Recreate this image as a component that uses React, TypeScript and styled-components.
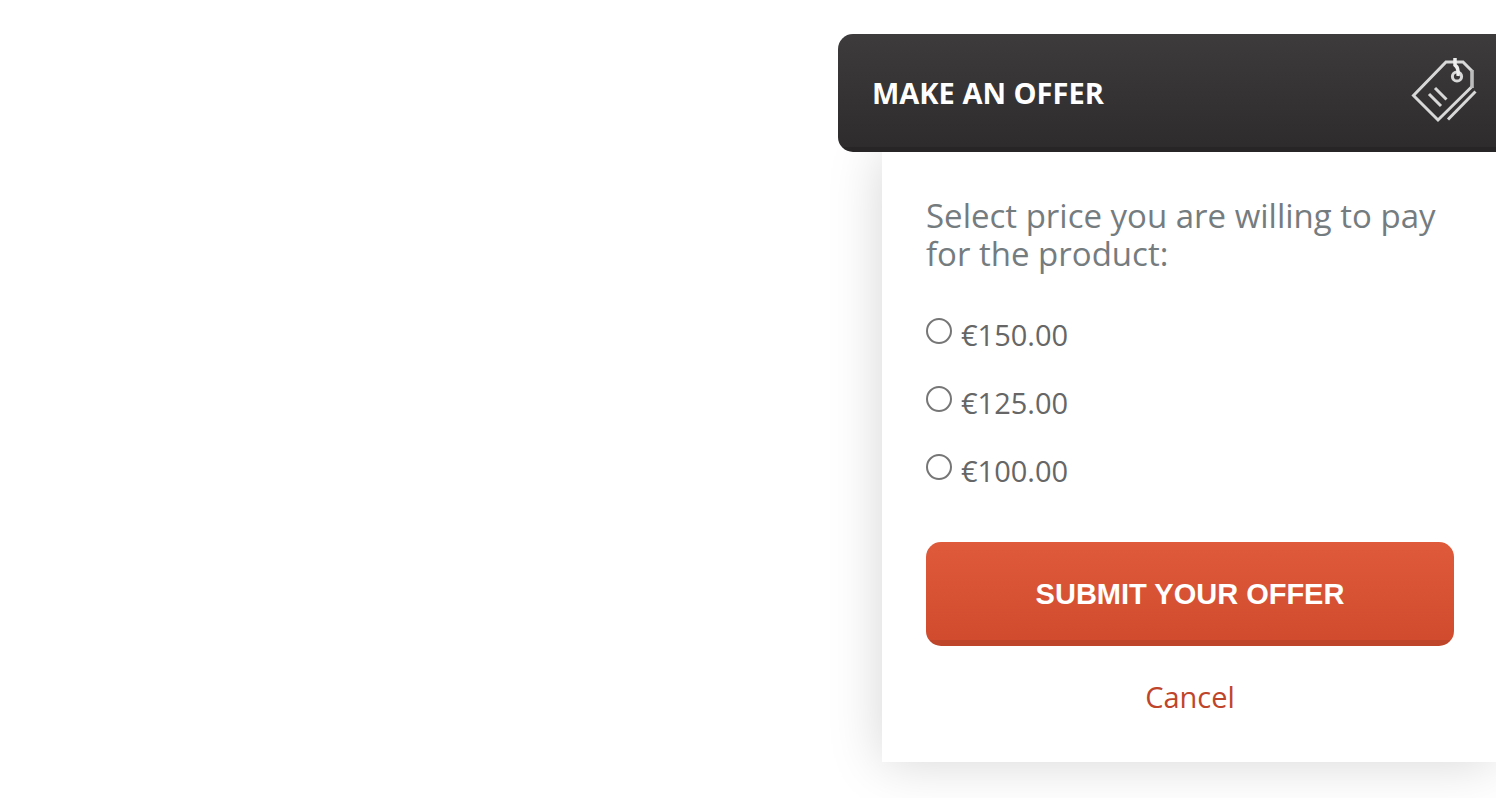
import React, { useState } from "react";
import styled, { createGlobalStyle } from "styled-components";

const GlobalStyle = createGlobalStyle`
  *, *::before, *::after { box-sizing: border-box; }
  body {
    margin: 0;
    background: #fff;
    font-family: "Open Sans", sans-serif;
  }
`;

const Page = styled.main`
  display: flex;
  justify-content: flex-end;
  padding: 34px 0 36px;
  overflow: hidden;
`;

const Widget = styled.section`
  display: flex;
  flex-direction: column;
  width: 100%;
  max-width: 658px;
`;

const Header = styled.header`
  position: relative;
  z-index: 1;
  display: flex;
  align-items: center;
  justify-content: space-between;
  height: 118px;
  padding: 0 18px 0 34px;
  border-radius: 15px 0 0 15px;
  background:
    linear-gradient(#282526, #282526) bottom / 100% 5px no-repeat,
    linear-gradient(#3d3b3c, #2d2b2c);
`;

const Title = styled.h1`
  margin: 0;
  color: #fff;
  font-size: 29px;
  line-height: 40px;
  font-weight: 700;
`;

const TagIcon = styled.svg`
  width: 68px;
  height: 68px;
  margin-bottom: 4px;
  fill: none;
  stroke: #d8d8d8;
  stroke-width: 3;
`;

const Panel = styled.form`
  margin-left: 44px;
  padding: 45px 42px 45px 44px;
  background: #fff;
  box-shadow: 0 0 50px rgba(0, 0, 0, 0.17);
`;

const Options = styled.fieldset`
  display: flex;
  flex-direction: column;
  gap: 28px;
  margin: 0;
  padding: 0;
  border: 0;
`;

const Prompt = styled.legend`
  margin-bottom: 42px;
  padding: 0;
  color: #757c80;
  font-size: 33px;
  line-height: 38px;
`;

const Option = styled.label`
  display: flex;
  align-items: flex-start;
  gap: 9px;
  color: #666;
  font-size: 29px;
  line-height: 40px;
`;

const Radio = styled.input`
  appearance: none;
  width: 26px;
  height: 26px;
  margin: 3px 0 0;
  border: 2px solid #767676;
  border-radius: 50%;
  background: #fff;

  &:checked {
    border-color: #c0462b;
    background: radial-gradient(#c0462b 45%, #fff 50%);
  }
`;

const Submit = styled.button`
  display: block;
  width: 100%;
  height: 104px;
  margin-top: 51px;
  padding: 0;
  border: 0;
  border-radius: 15px;
  background:
    linear-gradient(#bf452a, #bf452a) bottom / 100% 6px no-repeat,
    linear-gradient(#df5a3a, #d04a2d);
  color: #fff;
  font-family: "Liberation Sans", Arial, sans-serif;
  font-size: 29px;
  font-weight: 700;
  cursor: pointer;
`;

const Actions = styled.div`
  display: flex;
  justify-content: center;
  margin-top: 31px;
`;

const Cancel = styled.a`
  color: #bf452a;
  font-size: 29px;
  line-height: 40px;
  text-decoration: none;
`;

const prices = ["€150.00", "€125.00", "€100.00"];

export default function App() {
  const [selected, setSelected] = useState<string | null>(null);

  return (
    <Page>
      <GlobalStyle />
      <Widget>
        <Header>
          <Title>MAKE AN OFFER</Title>
          <TagIcon viewBox="0 0 68 68" aria-hidden="true">
            <path d="M62 14 L53 5 H36 L3.5 38.5 L28 63 L62 29.5" />
            <path d="M62 13 V31" stroke="#bcbcbc" strokeWidth="3.6" />
            <path d="M38 62.5 L65.5 34.5" />
            <path d="M19 37 L31 49 M25 31 L36.5 42.5" />
            <circle cx="47" cy="19.5" r="4.6" />
            <path d="M45 1 V8 Q49 11 48 19" strokeWidth="3.5" stroke="#eee" />
          </TagIcon>
        </Header>
        <Panel onSubmit={(event) => event.preventDefault()}>
          <Options>
            <Prompt>Select price you are willing to pay for the product:</Prompt>
            {prices.map((price) => (
              <Option key={price}>
                <Radio
                  type="radio"
                  name="price"
                  value={price}
                  checked={selected === price}
                  onChange={() => setSelected(price)}
                />
                {price}
              </Option>
            ))}
          </Options>
          <Submit type="submit">SUBMIT YOUR OFFER</Submit>
          <Actions>
            <Cancel href="#cancel">Cancel</Cancel>
          </Actions>
        </Panel>
      </Widget>
    </Page>
  );
}
